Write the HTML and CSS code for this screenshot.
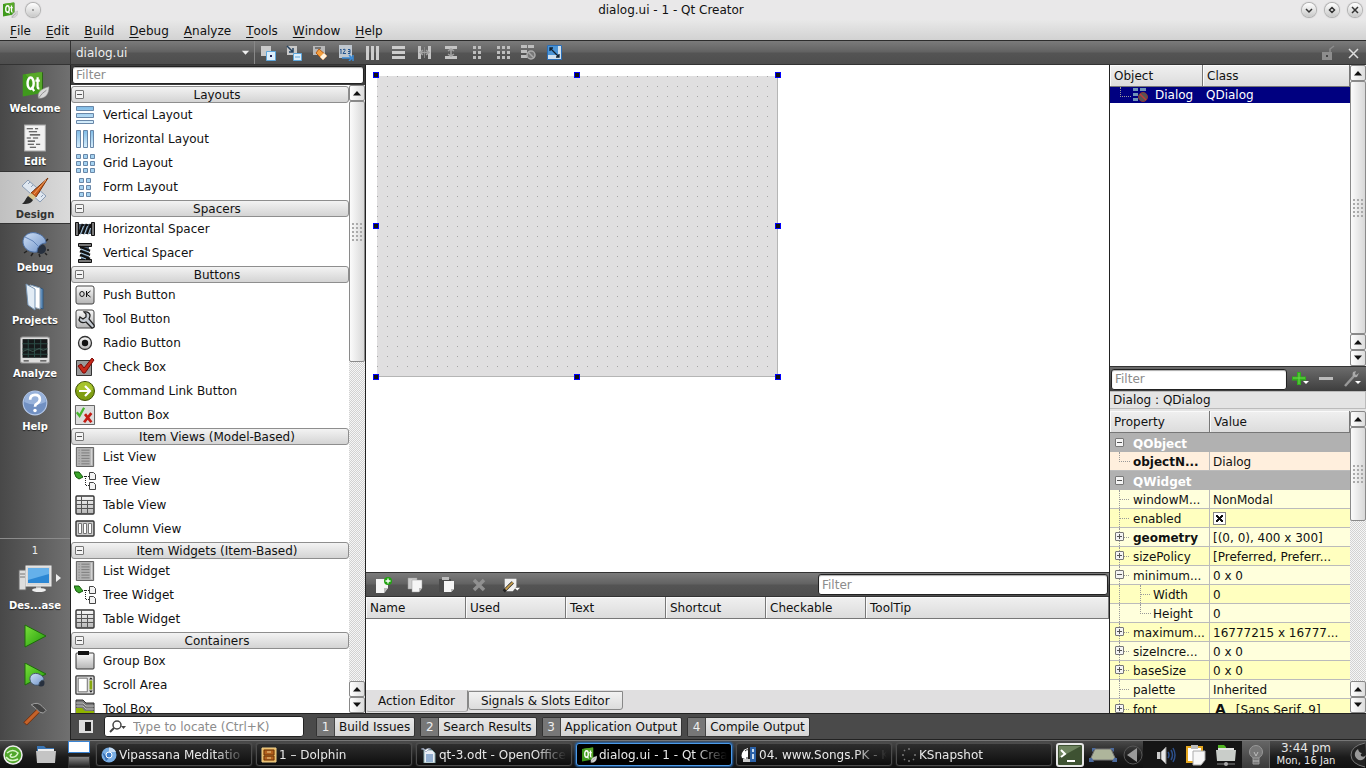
FILE: index.html
```html
<!DOCTYPE html>
<html lang="en">
<head>
<meta charset="utf-8">
<title>dialog.ui - 1 - Qt Creator</title>
<link rel="stylesheet" href="styles.css">
</head>
<body>
<svg class="defs" aria-hidden="true">
  <defs>
    <linearGradient id="gBlue" x1="0" y1="0" x2="0" y2="1"><stop offset="0" stop-color="#7fbbe6"/><stop offset="1" stop-color="#d9effc"/></linearGradient>
    <linearGradient id="gGrey" x1="0" y1="0" x2="0" y2="1"><stop offset="0" stop-color="#fafafa"/><stop offset="1" stop-color="#b4b4b4"/></linearGradient>
    <linearGradient id="gPlay" x1="0" y1="0" x2="1" y2="1"><stop offset="0" stop-color="#7be03c"/><stop offset="1" stop-color="#1f9a08"/></linearGradient>
    <linearGradient id="gBug" x1="0" y1="0" x2="1" y2="1"><stop offset="0" stop-color="#cfe0f6"/><stop offset="1" stop-color="#6f93c8"/></linearGradient>
  </defs>
  <symbol id="qt" viewBox="0 0 32 32"><path d="M2 4 24 1v24L2 29z" fill="#3f9a1c"/><path d="M5 3.600 24 1v24l-1 .2z" fill="#57a829"/><path d="M24 1l1 1v22l-1 1z" fill="#24670c"/><ellipse cx="11" cy="14" rx="3.500" ry="6.500" fill="none" stroke="#fff" stroke-width="2.800"/><path d="M12 18l3 5M19 7v11q0 2 2 2M16.500 11h5" fill="none" stroke="#fff" stroke-width="2.500"/><path d="M20 31c-2-7 4-11 12-13 0 8-4 14-12 13z" fill="#d8d8d8" stroke="#999" stroke-width=".6"/><path d="M20 31q4-6 9-9" stroke="#888" fill="none"/></symbol>
  <symbol id="edit" viewBox="0 0 22 27"><path d="M1 1h20v25H1z" fill="#f1f1f1" stroke="#aaa"/><path d="M3 4.500h6M11 4.500h3M5 7.500h8M6 10.500h10M3 13.500h4M9 13.500h5M4 16.500h7M4 19.500h6M12 19.500h4M6 22.500h6" stroke="#3c3c3c"/></symbol>
  <symbol id="design" viewBox="0 0 28 28"><path d="M7 3l18 16-6 6L1 9z" fill="#dfe7f0" stroke="#8a9cb4"/><path d="M9 5l-2 2M12 8l-2 2M15 11l-2 2M19 15l-2 2M22 18l-2 2" stroke="#8a9cb4"/><path d="M27 1 15 20l-5-4z" fill="#cc5f1c" stroke="#7a3208"/><path d="M25 3 13 17" stroke="#f0a060"/><path d="M15 20l-5-4-3 3 5 4z" fill="#d8c68c"/><path d="M7 19l5 4c-2 4-6 4-11 4 3-2 3-5 6-8z" fill="#2a2a2a"/></symbol>
  <symbol id="bug" viewBox="0 0 28 28"><path d="M6 21l-3 2M12 23l-2 3M24 12l3-3M26 20h2M18 24l1 3M24 23l2 2" stroke="#222" stroke-width="1.500"/><circle cx="20" cy="19" r="5" fill="#27303e"/><path d="M2 13C1 5 10 0 18 4c5 2 7 6 7 9-4 0-9 3-9 9C9 23 3 19 2 13z" fill="url(#gBug)" stroke="#4c6ea1"/><path d="M4 7q9 3 14 10" stroke="#6385b8" fill="none"/></symbol>
  <symbol id="projects" viewBox="0 0 20 28"><path d="M7 2l11 4v20L7 22z" fill="#5d8bb8" stroke="#31577d"/><path d="M5 2l10 3v21L5 23z" fill="#fff" stroke="#9ab"/><path d="M1 1l9 5v21l-7-5z" fill="#e2ecf5" stroke="#7795b4"/></symbol>
  <symbol id="analyze" viewBox="0 0 30 27"><rect x="1" y="1" width="28" height="25" rx="2" fill="#ddd" stroke="#999"/><path d="M3 3h24v18H3z" fill="#16191a"/><path d="M8.500 3v18M14.500 3v18M20.500 3v18M3 7.500h24M3 12.500h24M3 17.500h24" stroke="#2b4a44"/><path d="M3 15l5-2 5 2 6-3 4 2 4-2" fill="none" stroke="#486860" stroke-width=".7"/><path d="M4 24h5M20 24h6" stroke="#444"/></symbol>
  <symbol id="help" viewBox="0 0 26 26"><circle cx="13" cy="13" r="11" fill="#7190c2" stroke="#b7caea"/><path d="M3 12a10 10 0 0 1 20 0q-10 5-20 0z" fill="#98b2da"/><path d="M8.500 10q0-4.500 4.500-4.500t4.500 4q0 2.500-2.500 4-2 1-2 3" fill="none" stroke="#fff" stroke-width="2.500"/><circle cx="13" cy="20" r="1.600" fill="#fff"/></symbol>
  <symbol id="computer" viewBox="0 0 34 28"><path d="M1 5h7v20H1z" fill="#ddd" stroke="#666"/><path d="M2 9h5M2 12h5" stroke="#777"/><rect x="8" y="1" width="25" height="20" fill="#d8d8d8" stroke="#eee"/><path d="M10 3h21v15H10z" fill="#2c87d4"/><path d="M10 3h21v6L10 15z" fill="#65b0ea"/><path d="M18 21h5v3h-5z" fill="#bbb"/><ellipse cx="21" cy="25" rx="7" ry="2" fill="#eee"/></symbol>
  <symbol id="run" viewBox="0 0 24 24"><path d="M2 1l21 11L2 23z" fill="url(#gPlay)" stroke="#1d6d0a"/></symbol>
  <symbol id="rundebug" viewBox="0 0 24 24"><path d="M2 0l21 11L2 22z" fill="url(#gPlay)" stroke="#1d6d0a"/><circle cx="18" cy="20" r="3.500" fill="#27303e"/><path d="M7 17c-1-5 4-8 9-6 4 2 5 4 5 6-3 0-5 2-5 5-5 1-8-1-9-5z" fill="url(#gBug)" stroke="#456"/></symbol>
  <symbol id="hammer" viewBox="0 0 26 26"><path d="M15 8l3 3L4 25l-3-3z" fill="#c5622a" stroke="#6d2e0c"/><path d="M9 3q7-4 12 2l4 4-3 3-4-1-4-4z" fill="#444" stroke="#ccc" stroke-width=".7"/></symbol>

  <symbol id="vlay" viewBox="0 0 20 20"><g fill="url(#gBlue)" stroke="#6887a8"><path d="M1.500 1.500h17v4h-17zM1.500 8.500h17v4h-17zM1.500 15.500h17v3h-17z"/></g></symbol>
  <symbol id="hlay" viewBox="0 0 20 20"><g fill="url(#gBlue)" stroke="#6887a8"><path d="M1.500 1.500h4v17h-4zM8.500 1.500h4v17h-4zM15.500 1.500h3v17h-3z"/></g></symbol>
  <symbol id="glay" viewBox="0 0 20 20"><g fill="#a5d2f0" stroke="#6887a8"><path d="M1.500 1.500h4v4h-4zM8.500 1.500h4v4h-4zM15.500 1.500h4v4h-4zM1.500 8.500h4v4h-4zM8.500 8.500h4v4h-4zM15.500 8.500h4v4h-4zM1.500 15.500h4v4h-4zM8.500 15.500h4v4h-4zM15.500 15.500h4v4h-4z"/></g></symbol>
  <symbol id="flay" viewBox="0 0 20 20"><g fill="#a5d2f0" stroke="#6887a8"><path d="M4.500 1.500h4v4h-4zM11.500 1.500h4v4h-4zM4.500 8.500h4v4h-4zM11.500 8.500h4v4h-4zM4.500 15.500h4v4h-4zM11.500 15.500h4v4h-4z"/></g></symbol>
  <symbol id="hspc" viewBox="0 0 20 20"><path d="M4 5h12v10H4z" fill="#48586a"/><path d="M.5 3.500h3v13h-3zM16.500 3.500h3v13h-3z" fill="#777" stroke="#111"/><path d="M4 15l4-10M8 15l4-10M12 15l4-10" fill="none" stroke="#111" stroke-width="2.500"/><path d="M5.500 15l3-8M9.500 15l3-8M13.500 15l2-6" stroke="#a8c8e0"/></symbol>
  <symbol id="vspc" viewBox="0 0 20 20"><path d="M6 4h8v12H6z" fill="#48586a"/><path d="M3.500.5h13v3h-13zM3.500 16.500h13v3h-13z" fill="#777" stroke="#111"/><path d="M5 4l10 4M5 8l10 4M5 12l10 4" fill="none" stroke="#111" stroke-width="2.500"/><path d="M6 6l8 3M6 10l8 3M6 14l5 2" stroke="#a8c8e0"/></symbol>
  <symbol id="push" viewBox="0 0 20 20"><rect x="1" y="1" width="18" height="18" rx="2" fill="url(#gGrey)" stroke="#444"/><ellipse cx="7" cy="9" rx="2.200" ry="2.500" fill="none" stroke="#111"/><path d="M11.500 6v6M15.500 6l-4 3 4 3" fill="none" stroke="#111"/></symbol>
  <symbol id="toolb" viewBox="0 0 20 20"><rect x="1" y="1" width="18" height="18" rx="2" fill="url(#gGrey)" stroke="#444"/><path d="M9 3q5-1 6 3 0 2-1 4l5 6q1 3-2 3l-6-6q-5 2-7-2l1-3 3 2 3-2V5z" fill="#c5cbd2" stroke="#222" stroke-width="1.300"/></symbol>
  <symbol id="radio" viewBox="0 0 20 20"><circle cx="10" cy="10" r="6.500" fill="url(#gGrey)" stroke="#333" stroke-width="1.300"/><circle cx="10" cy="10" r="3.200" fill="#111"/></symbol>
  <symbol id="check" viewBox="0 0 20 20"><path d="M1.500 3.500h15v15h-15z" fill="#999" stroke="#333"/><path d="M3 9l3-2 3 4 8-10 2 2-9 13H8z" fill="#c6281a" stroke="#7c0b08"/></symbol>
  <symbol id="cmd" viewBox="0 0 20 20"><circle cx="10" cy="10" r="9.500" fill="#7f9e13" stroke="#3f5006"/><path d="M2 9a8 8 0 0 1 16 0z" fill="#a6c32c"/><path d="M4 10h10M10 5l5 5-5 5" fill="none" stroke="#fff" stroke-width="2.200"/></symbol>
  <symbol id="bbox" viewBox="0 0 22 22"><path d="M.5.5h21v21H.5z" fill="#ddd" stroke="#555"/><path d="M2 8l3 4 5-9" fill="none" stroke="#46b52c" stroke-width="2.500"/><path d="M11 10l7 9M18 9l-8 10" stroke="#c41c14" stroke-width="3"/></symbol>
  <symbol id="list" viewBox="0 0 20 22"><path d="M.5.500h19v21H.5z" fill="#b2b2b2" stroke="#555"/><path d="M3 3.500h1M3 6.500h1M3 9.500h1M3 12.500h1M3 15.500h1M3 18.500h1M6 3.500h9M6 6.500h9M6 9.500h9M6 12.500h9M6 15.500h9M6 18.500h9" stroke="#777"/><path d="M17 2v18" stroke="#ddd"/></symbol>
  <symbol id="tree" viewBox="0 0 22 20"><path d="M0 1l5 0 4 5-4 2-3-2z" fill="#3ba52a" stroke="#15570c"/><path d="M10 5.500h5M11.500 5v9.500H15" fill="none" stroke="#222" stroke-dasharray="1 1"/><path d="M15.500 1.500h4l2 2v5h-6zM15.500 11.500h4l2 2v5h-6z" fill="#f3f3f3" stroke="#444"/></symbol>
  <symbol id="tabl" viewBox="0 0 20 20"><rect x="1" y="1" width="18" height="18" rx="1" fill="url(#gGrey)" stroke="#333" stroke-width="1.400"/><path d="M1 5.500h18M1 9.500h18M1 13.500h18M6.500 1v18M12.500 5v14" stroke="#555"/></symbol>
  <symbol id="colv" viewBox="0 0 20 20"><rect x="1" y="2" width="18" height="15" rx="1" fill="#ccc" stroke="#333" stroke-width="1.400"/><path d="M3.500 4.500h3v10h-3zM8.500 4.500h3v10h-3zM13.500 4.500h3v10h-3z" fill="#fff" stroke="#777"/></symbol>
  <symbol id="group" viewBox="0 0 20 20"><rect x="1" y="2" width="18" height="16" rx="1" fill="url(#gGrey)" stroke="#333"/><path d="M3 0h11v4H3z" fill="#111"/></symbol>
  <symbol id="scroll" viewBox="0 0 22 22"><rect x="1" y="1" width="20" height="20" rx="1" fill="#ddd" stroke="#333" stroke-width="1.400"/><path d="M3.500 3.500h10v15h-10z" fill="#fff" stroke="#666"/><path d="M16 6h3v10h-3z" fill="#88a80d"/><path d="M15.500 5h4l-2-2.500zM15.500 17h4l-2 2.500z" fill="#222"/></symbol>
  <symbol id="toolbox" viewBox="0 0 20 20"><path d="M1 1h7l3 3h8v15H1z" fill="#777" stroke="#333"/><path d="M1 4h7l3 3h8M1 7h7l3 3h8" fill="none" stroke="#bbb"/><path d="M1 9h6l3 3h9v7H1z" fill="#8fb300"/></symbol>
  <symbol id="up" viewBox="0 0 10 6"><path d="M1 5.500 5 1l4 4.500z"/></symbol>
  <symbol id="down" viewBox="0 0 10 6"><path d="M1 .5 5 5 9 .5z"/></symbol>
</svg>

<header class="titlebar">
  <svg class="i16"><use href="#qt"/></svg>
  <button class="round" aria-label="Sticky"><svg viewBox="0 0 14 14"><circle cx="7" cy="7" r="1" fill="#888"/></svg></button>
  <h1 class="title">dialog.ui - 1 - Qt Creator</h1>
  <div class="winbtns">
    <button class="round" aria-label="Minimize"><svg viewBox="0 0 14 14"><path d="M4 6l3 3 3-3" class="wl"/></svg></button>
    <button class="round" aria-label="Maximize"><svg viewBox="0 0 14 14"><path d="M7 4.500 9.500 7 7 9.500 4.500 7z" class="wl"/></svg></button>
    <button class="round" aria-label="Close window"><svg viewBox="0 0 14 14"><path d="M4 4l6 6M10 4l-6 6" class="wl"/></svg></button>
  </div>
</header>
<nav class="menubar">
  <button><u>F</u>ile</button><button><u>E</u>dit</button><button><u>B</u>uild</button><button><u>D</u>ebug</button><button><u>A</u>nalyze</button><button><u>T</u>ools</button><button><u>W</u>indow</button><button><u>H</u>elp</button>
</nav>
<div class="toolbar">
  <div class="docsel"><select aria-label="Open document"><option>dialog.ui</option></select><svg><use href="#down"/></svg></div>
  <div class="tools">
    <button aria-label="Edit Widgets"><svg viewBox="0 0 16 16"><path d="M1 1h10v10H1z" fill="#c9c9c9"/><path d="M6.500 6.500h9v9h-9z" fill="#dceefb" stroke="#5da6dc"/><path d="M10 10h2v2h-2z" fill="#225"/></svg></button>
    <button aria-label="Edit Signals/Slots"><svg viewBox="0 0 16 16"><path d="M1 1h10v9H1z" fill="#c9c9c9"/><path d="M7.500 8.500h8v7h-8z" fill="#dceefb" stroke="#5da6dc"/><path d="M9 12h5" stroke="#5da6dc"/><path d="M1 1l6 6M7 3v4H3" stroke="#23415f" stroke-width="1.500" fill="none"/></svg></button>
    <button aria-label="Edit Buddies"><svg viewBox="0 0 16 16"><path d="M1 1h12v9H1z" fill="#b9b9b9"/><path d="M3 3h6" stroke="#333"/><path d="M7 4l8 7-4 4-7-7z" fill="#f5a040" stroke="#b95d13"/><path d="M12 8l3 3-4 4-3-3z" fill="#fff4e0"/></svg></button>
    <button aria-label="Edit Tab Order"><svg viewBox="0 0 16 16"><path d="M1 0h13v13H1z" fill="#bfc7cf"/><path d="M2 5l1-1v5M5 4.500q3-1 2 1L5 8.500h3M10 4.500h2v4h-2M10 6.500h2" stroke="#24558e" fill="none"/><path d="M4 13h9M11 10l3 3-3 3M15 10v6" stroke="#3a8ad6" fill="none" stroke-width="1.500"/></svg></button>
    <button aria-label="Lay Out Horizontally"><svg viewBox="0 0 16 16"><path d="M2 1h3v14H2zM7 1h3v14H7zM12 1h3v14h-3z" fill="#cdcdcd"/></svg></button>
    <button aria-label="Lay Out Vertically"><svg viewBox="0 0 16 16"><path d="M2 1h13v3H2zM2 6h13v3H2zM2 11h13v3H2z" fill="#cdcdcd"/></svg></button>
    <button aria-label="Horizontal Splitter"><svg viewBox="0 0 16 16"><path d="M2 1h3v13H2zM12 1h3v13h-3z" fill="#c4c4c4"/><path d="M8.500 2v11" stroke="#888"/><path d="M4 7.500h9M7 5l-3 2.500L7 10M10 5l3 2.500L10 10" fill="none" stroke="#a2a2a2" stroke-width="1.500"/></svg></button>
    <button aria-label="Vertical Splitter"><svg viewBox="0 0 16 16"><path d="M3 1h12v3H3zM3 11h12v3H3z" fill="#c4c4c4"/><path d="M9 4v8M6 6l3-2 3 2M6 9l3 2 3-2" fill="none" stroke="#a2a2a2" stroke-width="1.500"/></svg></button>
    <button aria-label="Lay Out in Form"><svg viewBox="0 0 16 16"><path d="M5 1h3v3H5zM10 1h3v3h-3zM5 6h3v3H5zM10 6h3v3h-3zM5 11h3v3H5zM10 11h3v3h-3z" fill="#bdbdbd"/></svg></button>
    <button aria-label="Lay Out in Grid"><svg viewBox="0 0 16 16"><path d="M3 1h3v3H3zM8 1h3v3H8zM13 1h3v3h-3zM3 6h3v3H3zM8 6h3v3H8zM13 6h3v3h-3zM3 11h3v3H3zM8 11h3v3H8zM13 11h3v3h-3z" fill="#bdbdbd"/></svg></button>
    <button aria-label="Break Layout"><svg viewBox="0 0 16 16"><path d="M1 0h6v3H1zM8 0h6v3H8zM1 5h6v3H1zM1 10h6v3H1z" fill="#bdbdbd"/><circle cx="11" cy="10" r="4" fill="#777" stroke="#aaa" stroke-width="1.500"/><path d="M8 7l6 6" stroke="#aaa" stroke-width="1.500"/></svg></button>
    <button aria-label="Adjust Size"><svg viewBox="0 0 16 16"><path d="M1.500.5h14v14h-14z" fill="#cfe0ef" stroke="#2a6db5"/><path d="M2 1h10v9H2z" fill="#4b94d6"/><path d="M4 3l9 9M4 6V3h3M13 9v3h-3" stroke="#123" fill="none" stroke-width="1.300"/></svg></button>
  </div>
  <div class="tools end">
    <button aria-label="Unlock"><svg viewBox="0 0 16 16"><path d="M3 7h10v8H3z" fill="#8d8d8d"/><path d="M11 7V4l4-3" stroke="#8d8d8d" stroke-width="1.500" fill="none"/><path d="M7 10h2v2H7z" fill="#444"/></svg></button>
    <button aria-label="Close document"><svg viewBox="0 0 16 16"><path d="M4 4l9 9M13 4l-9 9" stroke="#ddd" stroke-width="1.500"/></svg></button>
  </div>
</div>

<div class="work">
  <aside class="modes">
    <button class="mode"><svg><use href="#qt"/></svg>Welcome</button>
    <button class="mode"><svg><use href="#edit"/></svg>Edit</button>
    <button class="mode on"><svg><use href="#design"/></svg>Design</button>
    <button class="mode"><svg><use href="#bug"/></svg>Debug</button>
    <button class="mode"><svg><use href="#projects"/></svg>Projects</button>
    <button class="mode"><svg><use href="#analyze"/></svg>Analyze</button>
    <button class="mode"><svg><use href="#help"/></svg>Help</button>
    <div class="kit">
      <span class="kitname">1</span>
      <button class="mode target"><svg><use href="#computer"/></svg>Des...ase<svg class="more" viewBox="0 0 5 8"><path d="M0 0l5 4-5 4z" fill="#eee"/></svg></button>
      <button class="act" aria-label="Run"><svg><use href="#run"/></svg></button>
      <button class="act" aria-label="Start Debugging"><svg><use href="#rundebug"/></svg></button>
      <button class="act" aria-label="Build"><svg><use href="#hammer"/></svg></button>
    </div>
  </aside>

  <div class="rest">
    <div class="panels">
      <section class="widgetbox">
        <div class="filterbar"><input class="filter" type="text" placeholder="Filter" aria-label="Filter widgets"></div>
        <div class="scrolled">
          <div class="wlist">
            <h2 class="cat"><span class="pm"></span>Layouts</h2>
            <ul>
              <li><svg><use href="#vlay"/></svg>Vertical Layout</li>
              <li><svg><use href="#hlay"/></svg>Horizontal Layout</li>
              <li><svg><use href="#glay"/></svg>Grid Layout</li>
              <li><svg><use href="#flay"/></svg>Form Layout</li>
            </ul>
            <h2 class="cat"><span class="pm"></span>Spacers</h2>
            <ul>
              <li><svg><use href="#hspc"/></svg>Horizontal Spacer</li>
              <li><svg><use href="#vspc"/></svg>Vertical Spacer</li>
            </ul>
            <h2 class="cat"><span class="pm"></span>Buttons</h2>
            <ul>
              <li><svg><use href="#push"/></svg>Push Button</li>
              <li><svg><use href="#toolb"/></svg>Tool Button</li>
              <li><svg><use href="#radio"/></svg>Radio Button</li>
              <li><svg><use href="#check"/></svg>Check Box</li>
              <li><svg><use href="#cmd"/></svg>Command Link Button</li>
              <li><svg><use href="#bbox"/></svg>Button Box</li>
            </ul>
            <h2 class="cat"><span class="pm"></span>Item Views (Model-Based)</h2>
            <ul>
              <li><svg><use href="#list"/></svg>List View</li>
              <li><svg><use href="#tree"/></svg>Tree View</li>
              <li><svg><use href="#tabl"/></svg>Table View</li>
              <li><svg><use href="#colv"/></svg>Column View</li>
            </ul>
            <h2 class="cat"><span class="pm"></span>Item Widgets (Item-Based)</h2>
            <ul>
              <li><svg><use href="#list"/></svg>List Widget</li>
              <li><svg><use href="#tree"/></svg>Tree Widget</li>
              <li><svg><use href="#tabl"/></svg>Table Widget</li>
            </ul>
            <h2 class="cat"><span class="pm"></span>Containers</h2>
            <ul>
              <li><svg><use href="#group"/></svg>Group Box</li>
              <li><svg><use href="#scroll"/></svg>Scroll Area</li>
              <li><svg><use href="#toolbox"/></svg>Tool Box</li>
            </ul>
          </div>
          <div class="sbar"><button aria-label="Scroll up"><svg><use href="#up"/></svg></button><div class="track"><div class="thumb t-widgets"></div></div><button aria-label="Scroll up"><svg><use href="#up"/></svg></button><button aria-label="Scroll down"><svg><use href="#down"/></svg></button></div>
        </div>
      </section>

      <main class="centre">
        <div class="canvas">
          <div class="form">
            <i class="h nw"></i><i class="h n"></i><i class="h ne"></i><i class="h w"></i><i class="h e"></i><i class="h sw"></i><i class="h s"></i><i class="h se"></i>
          </div>
        </div>
        <div class="actionbar">
          <button aria-label="New"><svg viewBox="0 0 18 18"><path d="M2 3h12v9l-4 5H2z" fill="#f5f5f5"/><path d="M14 12h-4v5z" fill="#bbb"/><circle cx="14" cy="5" r="4" fill="#22a312"/><path d="M14 2.500v5M11.500 5h5" stroke="#fff" stroke-width="1.300"/></svg></button>
          <button aria-label="Copy"><svg viewBox="0 0 18 18"><path d="M2 2h9v11H2z" fill="#ccc" stroke="#999" stroke-width=".5"/><path d="M6 4h10v8l-3 4H6z" fill="#f5f5f5" stroke="#999" stroke-width=".5"/><path d="M16 12h-3v4z" fill="#bbb"/></svg></button>
          <button aria-label="Paste"><svg viewBox="0 0 18 18"><path d="M1 3h12v13H1z" fill="#4a4a4a"/><path d="M4 1h7v3H4z" fill="#bbb"/><path d="M6 5h10v8l-3 3H6z" fill="#f5f5f5"/><path d="M16 13h-3v3z" fill="#bbb"/></svg></button>
          <button aria-label="Delete"><svg viewBox="0 0 18 18"><path d="M4 4l10 10M14 4L4 14" stroke="#909090" stroke-width="3.500"/></svg></button>
          <button aria-label="Configure"><svg viewBox="0 0 20 18"><path d="M3 2h13v9l-4 5H3z" fill="#f0f0f0"/><path d="M12 6L2 16" stroke="#222" stroke-width="3.500"/><path d="M12 6L4 14" stroke="#c8a050" stroke-width="2"/><path d="M14 12h6l-3 3z" fill="#fff"/></svg></button>
          <input class="filter" type="text" placeholder="Filter" aria-label="Filter actions">
        </div>
        <table class="actions"><thead><tr><th>Name</th><th>Used</th><th>Text</th><th>Shortcut</th><th>Checkable</th><th>ToolTip</th></tr></thead></table>
        <div class="actionbody"></div>
        <div class="tabs" role="tablist"><button role="tab" class="tab on">Action Editor</button><button role="tab" class="tab">Signals &amp; Slots Editor</button></div>
      </main>

      <section class="right">
        <div class="objects">
          <table class="otable">
            <thead><tr><th class="c-obj">Object</th><th>Class</th></tr></thead>
            <tbody><tr><td><div class="orow"><i class="elbow"></i><svg viewBox="0 0 16 16"><path d="M0 1h5v3H0zM7 1h6v3H7zM0 6h5v3H0zM0 11h5v3H0z" fill="#6f93b8"/><circle cx="10" cy="10" r="4.500" fill="#555" stroke="#8c3434"/><path d="M7 7l6 6" stroke="#c03a3a" stroke-width="1.500"/></svg>Dialog</div></td><td>QDialog</td></tr></tbody>
          </table>
          <div class="sbar"><button aria-label="Scroll up"><svg><use href="#up"/></svg></button><div class="track"><div class="thumb t-full"></div></div><button aria-label="Scroll up"><svg><use href="#up"/></svg></button><button aria-label="Scroll down"><svg><use href="#down"/></svg></button></div>
        </div>
        <div class="propbar">
          <input class="filter" type="text" placeholder="Filter" aria-label="Filter properties">
          <div class="propbtns">
            <button aria-label="Add property"><svg viewBox="0 0 18 16"><path d="M8 1v13M1 7.500h14" stroke="#2fae1b" stroke-width="4"/><path d="M8 2v11M2 7h12" stroke="#6fd84f"/><path d="M12 10h6l-3 3z" fill="#fff"/></svg></button>
            <button aria-label="Remove property"><svg viewBox="0 0 18 16"><path d="M2 6h14v3H2z" fill="#bbb"/></svg></button>
            <button aria-label="Configure properties"><svg viewBox="0 0 18 16"><path d="M2 15L11 5" stroke="#999" stroke-width="2.500"/><path d="M10 1q-2 6 4 5l2-4-3 2-1-1 1-3z" fill="#aaa"/><path d="M12 10h6l-3 3z" fill="#fff"/></svg></button>
          </div>
        </div>
        <div class="objlabel">Dialog : QDialog</div>
        <div class="props">
          <div class="pwrap">
          <table class="ptable">
            <thead><tr><th class="c-prop">Property</th><th>Value</th></tr></thead>
            <tbody>
              <tr class="grp"><td colspan="2"><div class="p"><i class="pm"></i>QObject</div></td></tr>
              <tr class="peach b"><td><div class="p"><i class="elbow"></i>objectN...</div></td><td>Dialog</td></tr>
              <tr class="grp"><td colspan="2"><div class="p"><i class="pm"></i>QWidget</div></td></tr>
              <tr><td><div class="p"><i class="tee"></i>windowM...</div></td><td>NonModal</td></tr>
              <tr class="alt"><td><div class="p"><i class="tee"></i>enabled</div></td><td><label class="cb"><input type="checkbox" checked aria-label="enabled"></label></td></tr>
              <tr class="b"><td><div class="p"><i class="tee"></i><i class="pm plus"></i>geometry</div></td><td>[(0, 0), 400 x 300]</td></tr>
              <tr class="alt"><td><div class="p"><i class="tee"></i><i class="pm plus"></i>sizePolicy</div></td><td>[Preferred, Preferr...</td></tr>
              <tr><td><div class="p"><i class="tee"></i><i class="pm"></i>minimum...</div></td><td>0 x 0</td></tr>
              <tr class="alt"><td><div class="p sub"><i class="line"></i><i class="tee"></i>Width</div></td><td>0</td></tr>
              <tr><td><div class="p sub"><i class="line"></i><i class="elbow"></i>Height</div></td><td>0</td></tr>
              <tr class="alt"><td><div class="p"><i class="tee"></i><i class="pm plus"></i>maximum...</div></td><td>16777215 x 16777...</td></tr>
              <tr><td><div class="p"><i class="tee"></i><i class="pm plus"></i>sizeIncre...</div></td><td>0 x 0</td></tr>
              <tr class="alt"><td><div class="p"><i class="tee"></i><i class="pm plus"></i>baseSize</div></td><td>0 x 0</td></tr>
              <tr><td><div class="p"><i class="tee"></i>palette</div></td><td>Inherited</td></tr>
              <tr class="alt"><td><div class="p"><i class="tee"></i><i class="pm plus"></i>font</div></td><td><b class="fonta">A</b>[Sans Serif, 9]</td></tr>
            </tbody>
          </table>
          </div>
          <div class="sbar"><button aria-label="Scroll up"><svg><use href="#up"/></svg></button><div class="track"><div class="thumb t-props"></div></div><button aria-label="Scroll up"><svg><use href="#up"/></svg></button><button aria-label="Scroll down"><svg><use href="#down"/></svg></button></div>
        </div>
      </section>
    </div>
    <footer class="status">
      <button class="side" aria-label="Toggle sidebar"><svg viewBox="0 0 14 13"><path d="M0 0h14v13H0z" fill="#ddd"/><path d="M6 2h6v9H6z" fill="#222"/></svg></button>
      <label class="locate"><svg viewBox="0 0 18 16"><circle cx="8" cy="6" r="4" fill="none" stroke="#444" stroke-width="1.500"/><path d="M5 9l-4 4" stroke="#444" stroke-width="2"/><path d="M12 7h5l-2.500 3z" fill="#444"/></svg><input type="text" placeholder="Type to locate (Ctrl+K)" aria-label="Locate"></label>
      <div class="panes">
        <button class="pane"><b>1</b><span>Build Issues</span></button>
        <button class="pane"><b>2</b><span>Search Results</span></button>
        <button class="pane"><b>3</b><span>Application Output</span></button>
        <button class="pane"><b>4</b><span>Compile Output</span></button>
      </div>
    </footer>
  </div>
</div>

<div class="taskbar">
  <div class="launch">
    <button aria-label="Application menu"><svg viewBox="0 0 22 22"><circle cx="11" cy="11" r="9" fill="#4fa62a" stroke="#eee" stroke-width="1.500"/><path d="M5 9q6-5 11 0-2 5-7 4-2-2 1-3M4 13q5 6 12 2" fill="none" stroke="#d9f5c8" stroke-width="1.500"/></svg></button>
    <button aria-label="Folders"><svg viewBox="0 0 22 22"><path d="M2 2h7l2 2h8v4H2z" fill="#3b76b5"/><path d="M3 5h16v4H3z" fill="#eee"/><path d="M1 7h20l-1 12H2z" fill="#c4c4c4"/></svg></button>
    <div class="pager"><i></i><i></i></div>
  </div>
  <div class="tasks">
    <button class="task"><svg viewBox="0 0 16 16"><circle cx="8" cy="8" r="7.500" fill="#79aee4"/><path d="M8 .5A7.500 7.500 0 0 1 15 5H8z" fill="#c9def4"/><path d="M1 5l4 9 3-3z" fill="#386fb4"/><circle cx="8" cy="8" r="3" fill="#3f7fcc" stroke="#fff"/></svg><span>Vipassana Meditatio</span></button>
    <button class="task"><svg viewBox="0 0 16 16"><path d="M1 1h14v14H1z" fill="#e0ae58" stroke="#f5d48e"/><path d="M3 3h10v5H3zM3 9h10v4H3z" fill="#b3611e" stroke="#6e3409"/><path d="M6 5h4M6 11h4" stroke="#f4d48f"/></svg><span>1 – Dolphin</span></button>
    <button class="task"><svg viewBox="0 0 16 16"><path d="M3 3h8l3 3v10H3z" fill="#e9eef5" stroke="#8aa"/><path d="M5 8h7M5 10h7M5 12h7M5 14h7" stroke="#3b6ea8"/><path d="M0 2q3-2 4 1 3-3 6-1-3 0-5 3Q3 2 0 2z" fill="#fff" stroke="#679" stroke-width=".5"/></svg><span>qt-3.odt - OpenOffice</span></button>
    <button class="task on"><svg><use href="#qt"/></svg><span>dialog.ui - 1 - Qt Crea</span></button>
    <button class="task"><svg viewBox="0 0 16 16"><path d="M7 1q-8 3-6 10l6 2z" fill="#fff"/><path d="M4 4q3-3 5 1v6H5" stroke="#222" fill="none"/><path d="M2 12h8v3H2z" fill="#ccc"/><path d="M9 0h6v15H9z" fill="#2c62a8"/><path d="M11 2h2v3h-2zM11 7h2v5h-2z" fill="#cde"/></svg><span>04. www.Songs.PK - K</span></button>
    <button class="task"><svg viewBox="0 0 16 16"><path d="M8 1v2M3 3l1 1M1 8h2M3 13l1-1M8 13v2M12 12l1 1M13 8h2" stroke="#777" stroke-width="1.500"/></svg><span>KSnapshot</span></button>
  </div>
  <div class="tray">
    <button class="konsole" aria-label="Konsole"><svg viewBox="0 0 28 24"><rect x="1" y="1" width="26" height="22" rx="2" fill="#3e5232" stroke="#e6e6e6" stroke-width="2"/><path d="M3 3h22L3 15z" fill="#6d835e"/><path d="M5 7l4 4-4 3M11 18h8" fill="none" stroke="#fff" stroke-width="2"/></svg></button>
    <button class="plank" aria-label="Keyboard"><svg viewBox="0 0 28 16"><path d="M6 2h16l5 11H1z" fill="#aeb59b" stroke="#777"/><path d="M3 1h4L3 5zM25 1h-4l4 4zM0 11h3l2 4H0zM28 11h-3l-2 4h5z" fill="#4b6a9e"/></svg></button>
    <button class="expand" aria-label="Show hidden icons"><svg viewBox="0 0 20 20"><circle cx="10" cy="10" r="9" fill="none" stroke="#555"/><path d="M14 3v14L4 10z" fill="#999"/></svg></button>
    <div class="icons">
      <button aria-label="Volume"><svg viewBox="0 0 22 22"><path d="M2 8h3v7H2z" fill="#ccc"/><path d="M6 8l5-5v17l-5-5z" fill="#e8e8e8" stroke="#888"/><path d="M13 8q2 3 0 6M16 6q3 5 0 10M18 4q4 7 0 14" fill="none" stroke="#2c4f8a" stroke-width="1.500"/></svg></button>
      <button aria-label="Clipboard"><svg viewBox="0 0 22 22"><path d="M2 3h15v15H2z" fill="#fff" stroke="#e5a820" stroke-width="2"/><path d="M6 1h7v4H6z" fill="#bbb"/><path d="M8 7h12v9l-4 5H8z" fill="#f7f7f7" stroke="#aaa"/></svg></button>
      <button aria-label="Devices"><svg viewBox="0 0 22 22"><path d="M3 1h6l2 2v3H3z" fill="#51b423"/><path d="M3 4h16v4H3z" fill="#e4e4e4"/><path d="M1 6h20l-1 11H2z" fill="#c9cdc9"/><path d="M2 20h18" stroke="#888"/><circle cx="11" cy="20" r="2" fill="#aaa"/></svg></button>
    </div>
    <button class="bulb" aria-label="Notifications"><svg viewBox="0 0 16 22"><circle cx="8" cy="8" r="6.500" fill="#777" stroke="#999"/><path d="M5 14h6v6H5z" fill="#777" stroke="#999"/><path d="M6 8l2 4 2-4M5 17h6" fill="none" stroke="#bbb"/></svg></button>
    <time class="clock"><span>3:44 pm</span><small>Mon, 16 Jan</small></time>
    <button class="cashew" aria-label="Panel tools"><svg viewBox="0 0 16 26"><path d="M15 1Q1 4 1 13t14 12" fill="#222" stroke="#777"/><path d="M8 7q-4 3-3 7 2 5 7 4 3-1 4-5-2 3-5 1-1-2 1-3-3 0-4-4z" fill="#999"/></svg></button>
  </div>
</div>
</body>
</html>
```
FILE: styles.css
```css
* { box-sizing: border-box; }
body {
  margin: 0;
  height: 100vh;
  display: flex;
  flex-direction: column;
  overflow: hidden;
  background: #e4e4e4;
  color: #111;
  font: 12px/16px "DejaVu Sans", sans-serif;
}
button, input, select { font: inherit; color: inherit; margin: 0; padding: 0; border: 0; background: none; }
button { display: flex; align-items: center; justify-content: center; }
h1, h2, ul { margin: 0; padding: 0; font: inherit; list-style: none; }
table { border-collapse: separate; border-spacing: 0; table-layout: fixed; width: 100%; }
th { font-weight: normal; text-align: left; }
input::placeholder { color: #8c8c8c; opacity: 1; }
.defs { position: absolute; width: 0; height: 0; }

/* window frame */
.titlebar { display: flex; align-items: center; height: 20px; padding: 0 4px 0 2px; gap: 8px; background: #e9e8e9; flex: none; }
.i16 { width: 16px; height: 16px; }
.title { flex: 1; text-align: center; }
.winbtns { display: flex; gap: 9px; }
.round { width: 14px; height: 14px; border-radius: 50%; background: linear-gradient(#fff, #c8c8c8); box-shadow: 0 0 1px 1px #aaa; }
.round svg { width: 14px; height: 14px; }
.wl { fill: none; stroke: #333; stroke-width: 1.5; }
.menubar { display: flex; height: 20px; gap: 15px; padding: 2px 10px 0; background: linear-gradient(#e8e8e8, #d2d2d2); flex: none; }
.menubar u { text-underline-offset: 2px; }

.toolbar { display: flex; align-items: center; height: 25px; padding-left: 70px; border-top: 1px solid #2c2c2c; border-bottom: 1px solid #333; background: linear-gradient(#7b7b7b, #626262 48%, #545454 52%, #4e4e4e); flex: none; }
.docsel { position: relative; width: 185px; height: 100%; border-left: 1px solid #333; border-right: 1px solid #888; }
.docsel select { width: 100%; height: 100%; padding-left: 5px; appearance: none; color: #eee; }
.docsel option { color: #111; }
.docsel svg { position: absolute; right: 4px; top: 9px; width: 9px; height: 6px; fill: #eee; pointer-events: none; }
.tools { display: flex; gap: 10px; margin-left: 5px; }
.tools svg { width: 16px; height: 16px; }
.tools.end { margin-left: auto; margin-right: 5px; }

/* mode selector */
.work { flex: 1; display: flex; min-height: 0; }
.modes { width: 71px; flex: none; display: flex; flex-direction: column; background: linear-gradient(90deg, #484848, #707070); border-right: 1px solid #222; overflow: hidden; }
.mode { flex: none; flex-direction: column; justify-content: flex-end; gap: 2px; height: 53px; width: 100%; padding-bottom: 1px; color: #fff; font-weight: bold; font-size: 10px; line-height: 16px; text-shadow: 0 1px 1px #222; }
.mode svg { width: 34px; height: 28px; }
.mode.on { color: #333; text-shadow: none; padding-bottom: 0; background: linear-gradient(90deg, #c0c0c0, #dadada); border-top: 1px solid #333; border-bottom: 1px solid #333; }
.kit { margin-top: auto; display: flex; flex-direction: column; align-items: center; border-top: 1px solid #8b8b8b; padding-top: 4px; width: 100%; height: 202px; }
.kitname { font-size: 10px; color: #eee; }
.target { position: relative; height: 56px; gap: 5px; }
.target .more { position: absolute; right: 9px; top: 15px; width: 5px; height: 8px; }
.act { flex: none; height: 39px; padding-top: 2px; }
.act svg { width: 24px; height: 24px; }

.rest { flex: 1; min-width: 0; display: flex; flex-direction: column; }
.panels { flex: 1; min-height: 0; display: flex; }

/* widget box */
.widgetbox { width: 294px; flex: none; display: flex; flex-direction: column; background: #fff; min-height: 0; }
.filterbar { background: #3c3c3c; padding: 1px 1px 2px; height: 20px; flex: none; }
.filter { display: block; width: 100%; height: 18px; padding: 0 3px; background: #fff; border: 1px solid #222; border-radius: 3px; box-shadow: inset 0 1px 1px #aaa; }
.scrolled { flex: 1; min-height: 0; display: flex; }
.wlist { flex: 1; min-width: 0; overflow: hidden; }
.cat { position: relative; height: 17px; margin-top: 1px; text-align: center; padding-left: 14px; line-height: 16px; border: 1px solid #8e8e8e; border-radius: 3px; background: linear-gradient(#f3f3f3, #d4d4d4); }
.pm { display: block; position: absolute; left: 3px; top: 3px; width: 9px; height: 9px; border: 1px solid #777; border-radius: 1px; background: linear-gradient(#555, #555) center / 5px 1px no-repeat #f4f4f4; }
.pm.plus { background: linear-gradient(#555, #555) center / 5px 1px no-repeat, linear-gradient(#555, #555) center / 1px 5px no-repeat, #f4f4f4; }
.wlist li { display: flex; align-items: center; gap: 7px; height: 24px; padding-left: 3px; }
.wlist li svg { width: 22px; height: 20px; flex: none; }

.sbar { width: 16px; flex: none; display: flex; flex-direction: column; background: #e8e8e8; }
.sbar button { height: 16px; flex: none; border: 1px solid #888; border-radius: 2px; background: linear-gradient(90deg, #fff, #dcdcdc); }
.sbar svg { width: 10px; height: 6px; fill: #111; }
.track { flex: 1; min-height: 0; background: repeating-conic-gradient(#d2d2d2 0 25%, #f6f6f6 0 50%) 0 0 / 2px 2px; }
.thumb { border: 1px solid #8a8a8a; border-radius: 2px; background: linear-gradient(90deg, #fbfbfb, #d8d8d8); display: flex; }
.thumb::after { content: ""; margin: auto; width: 12px; height: 20px; background: radial-gradient(circle, #aaa 1px, transparent 1px) 0 0 / 4px 4px; }
.t-widgets { height: 45%; }
.t-full { height: 100%; }
.t-props { height: 37%; }

/* form editor */
.centre { flex: 1; min-width: 0; display: flex; flex-direction: column; border-left: 1px solid #222; border-right: 1px solid #222; background: #fff; }
.canvas { flex: 1; min-height: 0; padding: 11px; overflow: hidden; }
.form { position: relative; width: 401px; height: 301px; border-right: 1px solid #b5b5b5; border-bottom: 1px solid #b5b5b5; background: conic-gradient(from 0deg at 1px 1px, transparent 75%, #a4a4a4 0) 0 0 / 10px 10px, #e0dfe0; }
.h { position: absolute; width: 6px; height: 6px; background: #111; border: 1px solid #0000ff; }
.nw, .n, .ne { top: -4px; }
.w, .e { top: 147px; }
.sw, .s, .se { bottom: -4px; }
.nw, .w, .sw { left: -4px; }
.n, .s { left: 197px; }
.ne, .e, .se { right: -4px; }

.actionbar { display: flex; align-items: center; gap: 14px; height: 25px; padding: 0 1px 0 8px; flex: none; border-top: 1px solid #333; border-bottom: 1px solid #333; background: linear-gradient(#7b7b7b, #626262 48%, #545454 52%, #4e4e4e); }
.actionbar svg { width: 18px; height: 18px; }
.actionbar .filter { width: 290px; margin-left: auto; height: 21px; }
.actions { flex: none; }
th { height: 22px; padding: 1px 4px 0; border-right: 1px solid #777; border-bottom: 1px solid #777; background: linear-gradient(#f0f0f0, #dcdcdc); box-shadow: inset 1px 1px #fafafa; }
.actions th { width: 100px; }
.actions th:last-child { width: auto; }
.actionbody { height: 71px; flex: none; background: #fff; }
.tabs { display: flex; align-items: flex-start; height: 23px; flex: none; background: #e0dfe0; }
.tab { height: 19px; padding: 0 12px; margin-top: 1px; background: linear-gradient(#f2f2f2, #dcdcdc); border: 1px solid #888; border-radius: 0 0 3px 3px; }
.tab.on { height: 22px; margin-top: 0; padding: 0 12px 0 11px; border-color: transparent #888 #aaa transparent; background: #e0dfe0; }

/* object inspector and properties */
.right { width: 256px; flex: none; display: flex; flex-direction: column; min-height: 0; background: #e4e4e4; }
.objects { height: 301px; flex: none; display: flex; background: #fff; }
.otable { flex: 1; width: auto; align-self: flex-start; }
.c-obj { width: 93px; }
.otable td { height: 16px; padding: 0 0 0 3px; background: #000080; color: #fff; line-height: 16px; }
.orow { display: flex; align-items: center; height: 16px; padding-left: 20px; gap: 6px; position: relative; }
.orow svg { width: 16px; height: 16px; }
.elbow, .tee, .line { position: absolute; left: 9px; top: 0; }
.elbow { width: 11px; height: 10px; border-left: 1px dotted #999; border-bottom: 1px dotted #999; }
.tee { width: 11px; height: 100%; border-left: 1px dotted #999; background: repeating-linear-gradient(90deg, #999 0 1px, transparent 1px 2px) 0 9px / 100% 1px no-repeat; }
.line { height: 100%; border-left: 1px dotted #999; }
.orow .elbow { left: 7px; }
.propbar { display: flex; align-items: center; gap: 4px; height: 25px; flex: none; padding: 0 5px 0 1px; border-top: 1px solid #333; background: linear-gradient(#6c6c6c, #3e3e3e); }
.propbar .filter { flex: 1; min-width: 0; height: 21px; }
.propbtns { display: flex; gap: 8px; }
.propbar svg { width: 18px; height: 16px; }
.objlabel { height: 18px; padding-left: 3px; line-height: 17px; margin-bottom: 2px; flex: none; border: 1px solid #bbb; border-left: 0; }
.props { flex: 1; min-height: 0; display: flex; }
.pwrap { flex: 1; min-width: 0; overflow: hidden; background: #fff; }
.c-prop { width: 100px; }
.ptable td { height: 19px; padding: 2px 3px 0; background: #ffffdc; border-bottom: 1px solid #bbb; border-right: 1px solid #bbb; white-space: nowrap; line-height: 16px; overflow: hidden; }
.ptable td:first-child { padding: 0; }
.ptable td:last-child { border-right: 0; }
.ptable .alt td { background: #ffffbf; }
.ptable .peach td { background: #ffefdd; }
.ptable .grp td { background: #b1b1b1; border: 0; color: #fff; font-weight: bold; }
.b td:first-child { font-weight: bold; }
.p { position: relative; padding-left: 23px; height: 18px; line-height: 20px; }
.p .pm { left: 5px; top: 4px; }
.p.sub { padding-left: 43px; }
.sub .elbow, .sub .tee { left: 30px; }
.cb { display: block; height: 14px; }
.cb input { display: block; appearance: none; width: 13px; height: 13px; border: 1px solid #888; background: linear-gradient(45deg, transparent 38%, #111 38% 62%, transparent 62%) center / 7px 7px no-repeat, linear-gradient(-45deg, transparent 38%, #111 38% 62%, transparent 62%) center / 7px 7px no-repeat, #fff; }
.fonta { font-size: 14px; padding: 0 10px 0 2px; }

/* bottom bar */
.status { display: flex; align-items: center; height: 27px; flex: none; padding-left: 8px; border-top: 1px solid #222; border-bottom: 1px solid #222; background: #4a4a4a; }
.side svg { width: 14px; height: 13px; }
.locate { display: flex; align-items: center; width: 200px; height: 21px; margin: 0 12px 0 11px; padding: 0 4px; gap: 6px; background: #fff; border: 1px solid #222; border-radius: 3px; }
.locate svg { width: 18px; height: 16px; flex: none; }
.locate input { flex: 1; min-width: 0; outline: 0; }
.panes { display: flex; gap: 5px; }
.pane { height: 20px; border: 1px solid #333; border-radius: 2px; background: linear-gradient(#e8e8e8, #d4d4d4); }
.pane b { width: 18px; line-height: 18px; font-weight: normal; color: #eee; background: #777; border-right: 1px solid #444; }
.pane span { padding: 0 4px; }

/* desktop panel */
.taskbar { display: flex; align-items: center; height: 28px; flex: none; color: #e8e8e8; background: linear-gradient(#4a4a4a, #1a1a1a 60%, #111); border-top: 1px solid #777; }
.launch { display: flex; align-items: center; gap: 11px; width: 96px; padding-left: 2px; flex: none; }
.launch svg { width: 22px; height: 22px; }
.pager { width: 22px; height: 27px; display: flex; flex-direction: column; gap: 3px; }
.pager i { flex: 1; border: 1px solid #3a84d4; background: #fff; }
.pager i + i { border-color: #333; background: linear-gradient(#888, #222); }
.tasks { flex: 1; min-width: 0; display: flex; gap: 4px; }
.task { flex: 1; min-width: 0; justify-content: flex-start; gap: 2px; height: 23px; padding: 0 4px; border: 1px solid #4c4c4c; border-radius: 3px; background: linear-gradient(#2e2e2e, #0d0d0d); box-shadow: 0 0 1px #777; }
.task svg { width: 16px; height: 16px; flex: none; }
.task span { flex: 1; min-width: 0; text-align: left; white-space: nowrap; overflow: hidden; -webkit-mask-image: linear-gradient(90deg, #000 75%, transparent); mask-image: linear-gradient(90deg, #000 75%, transparent); }
.task.on { border-color: #4c9be8; box-shadow: 0 0 2px 1px #2864a8; background: #000; }
.tray { display: flex; align-items: center; flex: none; height: 100%; margin-left: 4px; }
.konsole svg { width: 28px; height: 24px; }
.plank { margin-left: 5px; }
.plank svg { width: 28px; height: 16px; }
.expand { margin-left: 6px; }
.expand svg { width: 20px; height: 20px; }
.icons { display: flex; align-items: center; gap: 8px; height: 100%; padding: 0 5px 0 12px; background: #151515; }
.icons svg { width: 22px; height: 22px; }
.bulb { width: 28px; height: 100%; background: linear-gradient(#666, #3a3a3a); border-right: 1px solid #666; }
.bulb svg { width: 16px; height: 22px; }
.clock { width: 72px; display: flex; flex-direction: column; align-items: center; line-height: 13px; }
.clock small { font-size: 10px; line-height: 12px; }
.cashew { margin-left: 8px; }
.cashew svg { width: 16px; height: 26px; }
```
